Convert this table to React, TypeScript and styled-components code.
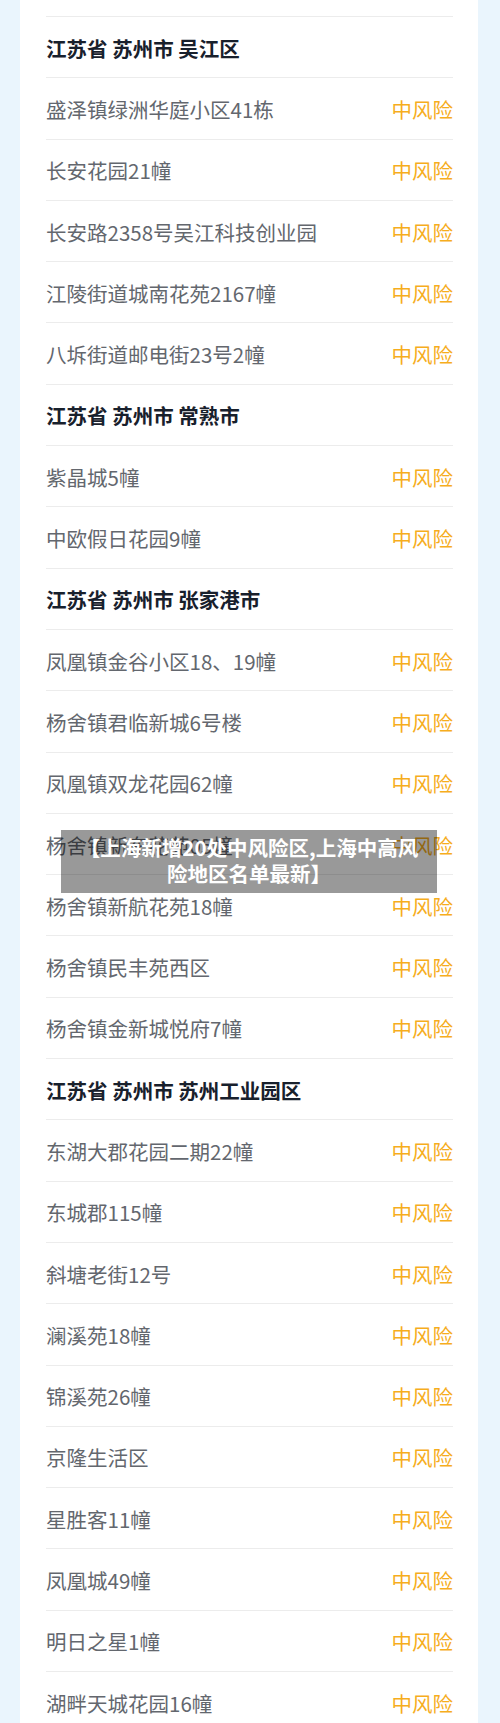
import React from 'react'
import styled, { createGlobalStyle } from 'styled-components'

const GlobalStyle = createGlobalStyle`
  html, body {
    margin: 0;
    padding: 0;
    background: #eaf5fd;
  }
  body {
    font-family: "Noto Sans CJK SC", "Liberation Sans", sans-serif;
  }
`

const Page = styled.div`
  position: relative;
  height: 1723px;
  overflow: hidden;
  background: #eaf5fd;
  padding: 0 22px 0 20px;
`

const Card = styled.div`
  background: #fff;
  height: 100%;
  padding: 16px 25px 0 26px;
  box-sizing: border-box;
`

const Row = styled.div<{ $header?: boolean }>`
  display: flex;
  align-items: center;
  justify-content: space-between;
  height: 61.3px;
  box-sizing: border-box;
  border-top: 1px solid #ececec;
  padding-top: 1px;
  font-size: 20.5px;
  font-weight: ${({ $header }) => ($header ? 700 : 400)};
  color: ${({ $header }) => ($header ? '#18202c' : '#63676e')};
  white-space: nowrap;
`

const Level = styled.span`
  color: #f6ad1d;
`

// overlay caption sitting on top of the list
const Banner = styled.div`
  position: absolute;
  top: 830px;
  left: 61px;
  width: 376px;
  height: 63px;
  box-sizing: border-box;
  padding: 4px 15px 0;
  background: rgba(0, 0, 0, 0.4);
  color: #fff;
  font-size: 20.5px;
  font-weight: 700;
  line-height: 26px;
  text-align: center;
`

type Group = { title: string; items: string[] }

const groups: Group[] = [
  {
    title: '江苏省 苏州市 吴江区',
    items: ['盛泽镇绿洲华庭小区41栋', '长安花园21幢', '长安路2358号吴江科技创业园', '江陵街道城南花苑2167幢', '八坼街道邮电街23号2幢'],
  },
  {
    title: '江苏省 苏州市 常熟市',
    items: ['紫晶城5幢', '中欧假日花园9幢'],
  },
  {
    title: '江苏省 苏州市 张家港市',
    items: [
      '凤凰镇金谷小区18、19幢',
      '杨舍镇君临新城6号楼',
      '凤凰镇双龙花园62幢',
      '杨舍镇新东花苑05幢',
      '杨舍镇新航花苑18幢',
      '杨舍镇民丰苑西区',
      '杨舍镇金新城悦府7幢',
    ],
  },
  {
    title: '江苏省 苏州市 苏州工业园区',
    items: [
      '东湖大郡花园二期22幢',
      '东城郡115幢',
      '斜塘老街12号',
      '澜溪苑18幢',
      '锦溪苑26幢',
      '京隆生活区',
      '星胜客11幢',
      '凤凰城49幢',
      '明日之星1幢',
      '湖畔天城花园16幢',
    ],
  },
]

const App = () => {
  return (
    <>
      <GlobalStyle />
      <Page>
        <Card>
          {groups.map((g) => (
            <React.Fragment key={g.title}>
              <Row $header>{g.title}</Row>
              {g.items.map((item) => (
                <Row key={item}>
                  <span>{item}</span>
                  <Level>中风险</Level>
                </Row>
              ))}
            </React.Fragment>
          ))}
        </Card>
        <Banner>【上海新增20处中风险区,上海中高风险地区名单最新】</Banner>
      </Page>
    </>
  )
}

export default App
